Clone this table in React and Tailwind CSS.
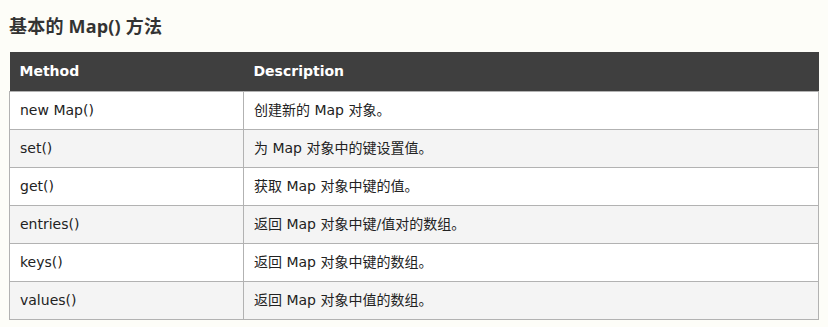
import React from 'react';

const rows = [
    ['new Map()', '创建新的 Map 对象。'],
    ['set()', '为 Map 对象中的键设置值。'],
    ['get()', '获取 Map 对象中键的值。'],
    ['entries()', '返回 Map 对象中键/值对的数组。'],
    ['keys()', '返回 Map 对象中键的数组。'],
    ['values()', '返回 Map 对象中值的数组。'],
];

const App = () => {
    return (
        <div className="w-[828px] h-[327px] bg-[#fdfdf8] pl-[9px] pr-[9px] pt-[13px] overflow-hidden">
            <h2 className="text-[18px] leading-[26px] font-bold text-[#333] tracking-[0.2px] font-['Open_Sans','Noto_Sans_CJK_SC',sans-serif]">
                基本的 Map() 方法
            </h2>
            <table className="mt-[13px] w-[810px] border-collapse text-[14px] font-['DejaVu_Sans','Noto_Sans_CJK_SC',sans-serif]">
                <thead>
                    <tr className="bg-[#3f3f3f] text-white h-[39px]">
                        <th className="w-[234px] text-left font-bold px-[10px]">Method</th>
                        <th className="text-left font-bold px-[10px]">Description</th>
                    </tr>
                </thead>
                <tbody>
                    { rows.map(([m, d], i) => (
                        <tr key={ i } className={ `h-[38px] ${i % 2 ? 'bg-[#f4f4f4]' : 'bg-white'}` }>
                            <td className="border border-[#b2b2b2] px-[10px] text-[#222]">{ m }</td>
                            <td className="border border-[#b2b2b2] px-[10px] text-[#222]">{ d }</td>
                        </tr>
                    )) }
                </tbody>
            </table>
        </div>
    );
};

export default App;
